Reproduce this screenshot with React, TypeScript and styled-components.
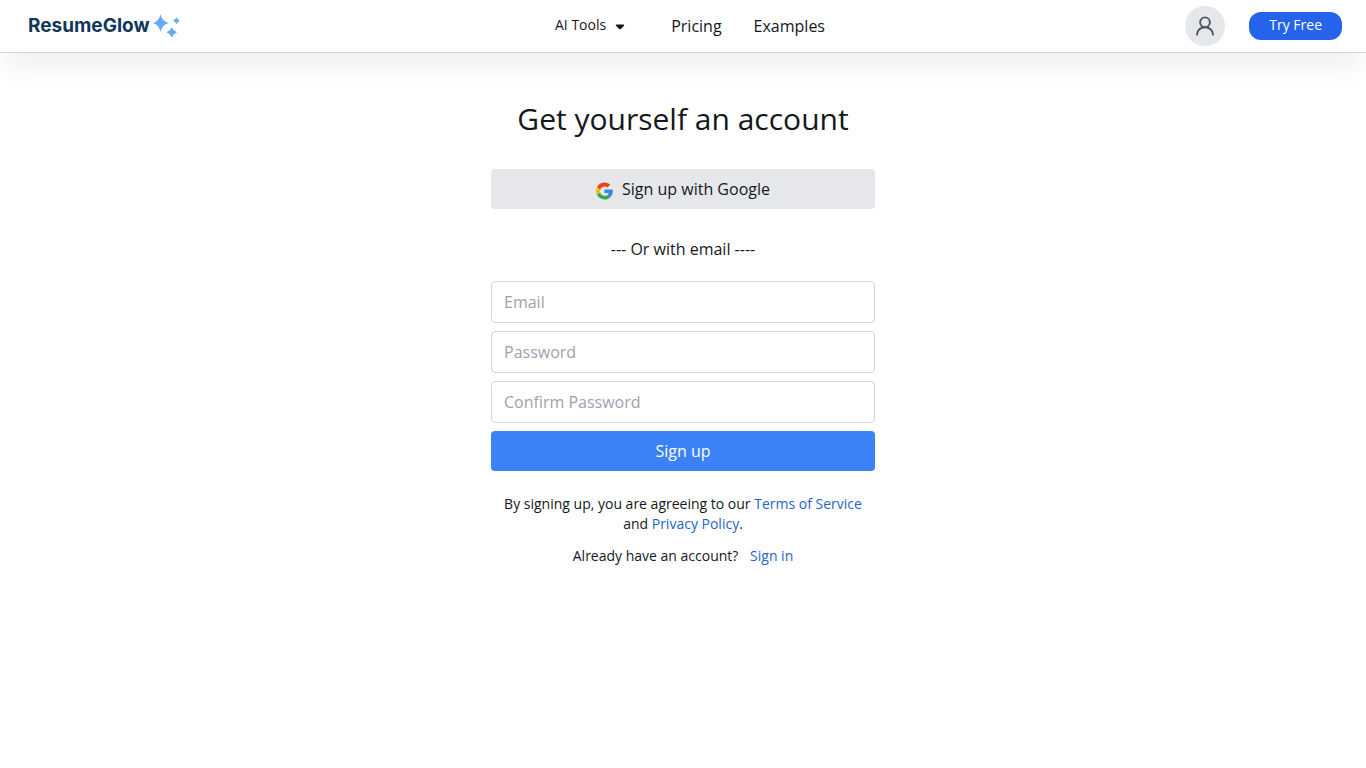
import React from "react";
import styled, { createGlobalStyle } from "styled-components";

const GlobalStyle = createGlobalStyle`
  *, *::before, *::after { box-sizing: border-box; }
  body {
    margin: 0;
    background: #fff;
    color: #14181c;
    font: 16px/24px "Open Sans", sans-serif;
  }
  button, input { font: inherit; color: inherit; margin: 0; }
  button { border: 0; cursor: pointer; }
  a { color: inherit; text-decoration: none; }
`;

const Header = styled.header`
  display: grid;
  grid-template-columns: 1fr auto 1fr;
  align-items: center;
  padding: 6px 24px;
  border-bottom: 1px solid #d1d5d5;
  box-shadow: 0 20px 25px -5px rgba(0, 24, 12, 0.06);
`;

const Brand = styled.a`
  display: flex;
  align-items: center;
  justify-self: start;
  gap: 3px;
  padding-left: 4px;
  color: #12365a;
  font: 700 19px/24px Inter, sans-serif;
`;

const Nav = styled.nav`
  display: flex;
  align-items: center;
  gap: 32px;
  padding-bottom: 2px;
`;

const NavLink = styled.a`
  padding-top: 2px;
`;

const MenuButton = styled.button`
  display: flex;
  align-items: center;
  gap: 9px;
  padding: 0 14px;
  background: none;
  font-size: 14px;
  line-height: 20px;
  svg { margin-top: 3px; }
`;

const Actions = styled.div`
  display: flex;
  align-items: center;
  justify-self: end;
  gap: 24px;
`;

const Avatar = styled.button`
  display: grid;
  place-items: center;
  width: 40px;
  height: 40px;
  padding: 0;
  border-radius: 50%;
  background: #e5e7eb;
  color: #4b5563;
`;

const TryLink = styled.a`
  padding: 3px 20px 5px;
  border-radius: 12px;
  background: #2563eb;
  color: #fff;
  font-size: 14px;
  line-height: 20px;
`;

const Main = styled.main`
  display: flex;
  flex-direction: column;
  max-width: 384px;
  margin: 0 auto;
  padding: 48px 0;
  text-align: center;
`;

const Title = styled.h1`
  margin: 0 0 32px;
  font-size: 30px;
  font-weight: 400;
  line-height: 36px;
`;

const FormButton = styled.button<{ $primary?: boolean }>`
  display: flex;
  align-items: center;
  justify-content: center;
  gap: 9px;
  width: 100%;
  padding: 8px 16px;
  border-radius: 4px;
  background: ${(p) => (p.$primary ? "#3b82f6" : "#e5e7eb")};
  color: ${(p) => (p.$primary ? "#fff" : "#14181c")};
  svg { margin-top: 3px; }
`;

const Divider = styled.p`
  margin: 28px 0 20px;
`;

const Form = styled.form`
  display: flex;
  flex-direction: column;
  gap: 8px;
`;

const Field = styled.input`
  width: 100%;
  padding: 8px 12px;
  border: 1px solid #d1d5db;
  border-radius: 4px;
  background: #fff;
  &::placeholder { color: #9ca3af; opacity: 1; }
`;

const Note = styled.p<{ $top: number }>`
  margin: ${(p) => p.$top}px 0 0;
  font-size: 14px;
  line-height: 20px;
`;

const TextLink = styled.a<{ $spaced?: boolean }>`
  margin-left: ${(p) => (p.$spaced ? 8 : 0)}px;
  color: #2563cb;
`;

const Sparkles = () => (
  <svg width="28" height="24" viewBox="0 0 28 24" fill="#66a9f4" aria-hidden="true">
    <path d="M7.500.5Q9.300 7.300 15.500 9Q9.300 10.700 7.500 18Q5.700 10.700.2 9Q5.700 7.300 7.500.5Z" />
    <path d="M18.800 13.200Q20.300 17 24 18.300Q20.300 19.600 18.800 23.500Q17.300 19.600 13.600 18.300Q17.300 17 18.800 13.200Z" />
    <path d="M23.500 3.300Q24.400 5.900 27 6.700Q24.400 7.500 23.500 10.200Q22.600 7.500 20 6.700Q22.600 5.900 23.500 3.300Z" />
  </svg>
);

const Caret = () => (
  <svg width="10" height="6" viewBox="0 0 10 6" fill="currentColor" aria-hidden="true">
    <path d="M1.5.5h7c.7 0 1 .8.5 1.3L5.800 4.900c-.5.5-1.100.5-1.600 0L1 1.800C.5 1.300.8.5 1.500.5Z" />
  </svg>
);

const Person = () => (
  <svg width="20" height="20" viewBox="0 0 20 20" fill="none" stroke="currentColor" strokeWidth="1.9" strokeLinecap="round" aria-hidden="true">
    <circle cx="10" cy="6.300" r="4.900" />
    <path d="M2 18.600c.2-4.300 3.500-7.400 8-7.400s7.800 3.100 8 7.400" />
  </svg>
);

const GoogleMark = () => (
  <svg width="17" height="18" viewBox="0 0 48 48" aria-hidden="true">
    <path fill="#EA4320" d="M24 11c3.500 0 6.200 1.200 8.400 3.200l7.700-7.700C35.900 2.400 30.500 0 24 0 14.600 0 6.500 5.400 2.600 13.200l9.200 7C13.600 14.700 18 11 24 11z" />
    <path fill="#3F83DC" d="M47.500 24.500c0-1.600-.2-3.100-.4-4.800H24v9.800h12.200c-.6 2.600-2 4.700-4.300 6.200l8 6.500C44.400 38 47.500 31.800 47.500 24.500z" />
    <path fill="#FBBC05" d="M11.800 28c-.5-1.300-.7-2.600-.7-4s.2-2.700.7-3.900l-9.200-6.900C.9 16.500 0 20.100 0 24s.9 7.500 2.600 10.800l9.200-6.800z" />
    <path fill="#34A853" d="M24 48c6.500 0 11.900-2.100 15.900-5.800l-8-6.500c-2 1.200-4.700 1.800-7.900 1.800-6 0-10.600-4-12.200-9.500l-9.200 6.800C6.500 42.600 14.600 48 24 48z" />
  </svg>
);

const FIELDS = [
  { name: "email", type: "email", label: "Email", complete: "email" },
  { name: "password", type: "password", label: "Password", complete: "new-password" },
  { name: "confirm", type: "password", label: "Confirm Password", complete: "new-password" },
];

export default function App() {
  return (
    <>
      <GlobalStyle />
      <Header>
        <Brand href="#">
          ResumeGlow
          <Sparkles />
        </Brand>
        <Nav>
          <MenuButton type="button" aria-haspopup="true">
            AI Tools
            <Caret />
          </MenuButton>
          <NavLink href="#pricing">Pricing</NavLink>
          <NavLink href="#examples">Examples</NavLink>
        </Nav>
        <Actions>
          <Avatar type="button" aria-label="Account">
            <Person />
          </Avatar>
          <TryLink href="#try">Try Free</TryLink>
        </Actions>
      </Header>
      <Main>
        <Title>Get yourself an account</Title>
        <FormButton type="button">
          <GoogleMark />
          Sign up with Google
        </FormButton>
        <Divider>--- Or with email ----</Divider>
        <Form onSubmit={(e) => e.preventDefault()}>
          {FIELDS.map((f) => (
            <Field
              key={f.name}
              name={f.name}
              type={f.type}
              placeholder={f.label}
              aria-label={f.label}
              autoComplete={f.complete}
            />
          ))}
          <FormButton type="submit" $primary>
            Sign up
          </FormButton>
        </Form>
        <Note $top={23}>
          By signing up, you are agreeing to our <TextLink href="#terms">Terms of Service</TextLink> and{" "}
          <TextLink href="#privacy">Privacy Policy</TextLink>.
        </Note>
        <Note $top={12}>
          Already have an account?{" "}
          <TextLink href="#signin" $spaced>
            Sign in
          </TextLink>
        </Note>
      </Main>
    </>
  );
}
